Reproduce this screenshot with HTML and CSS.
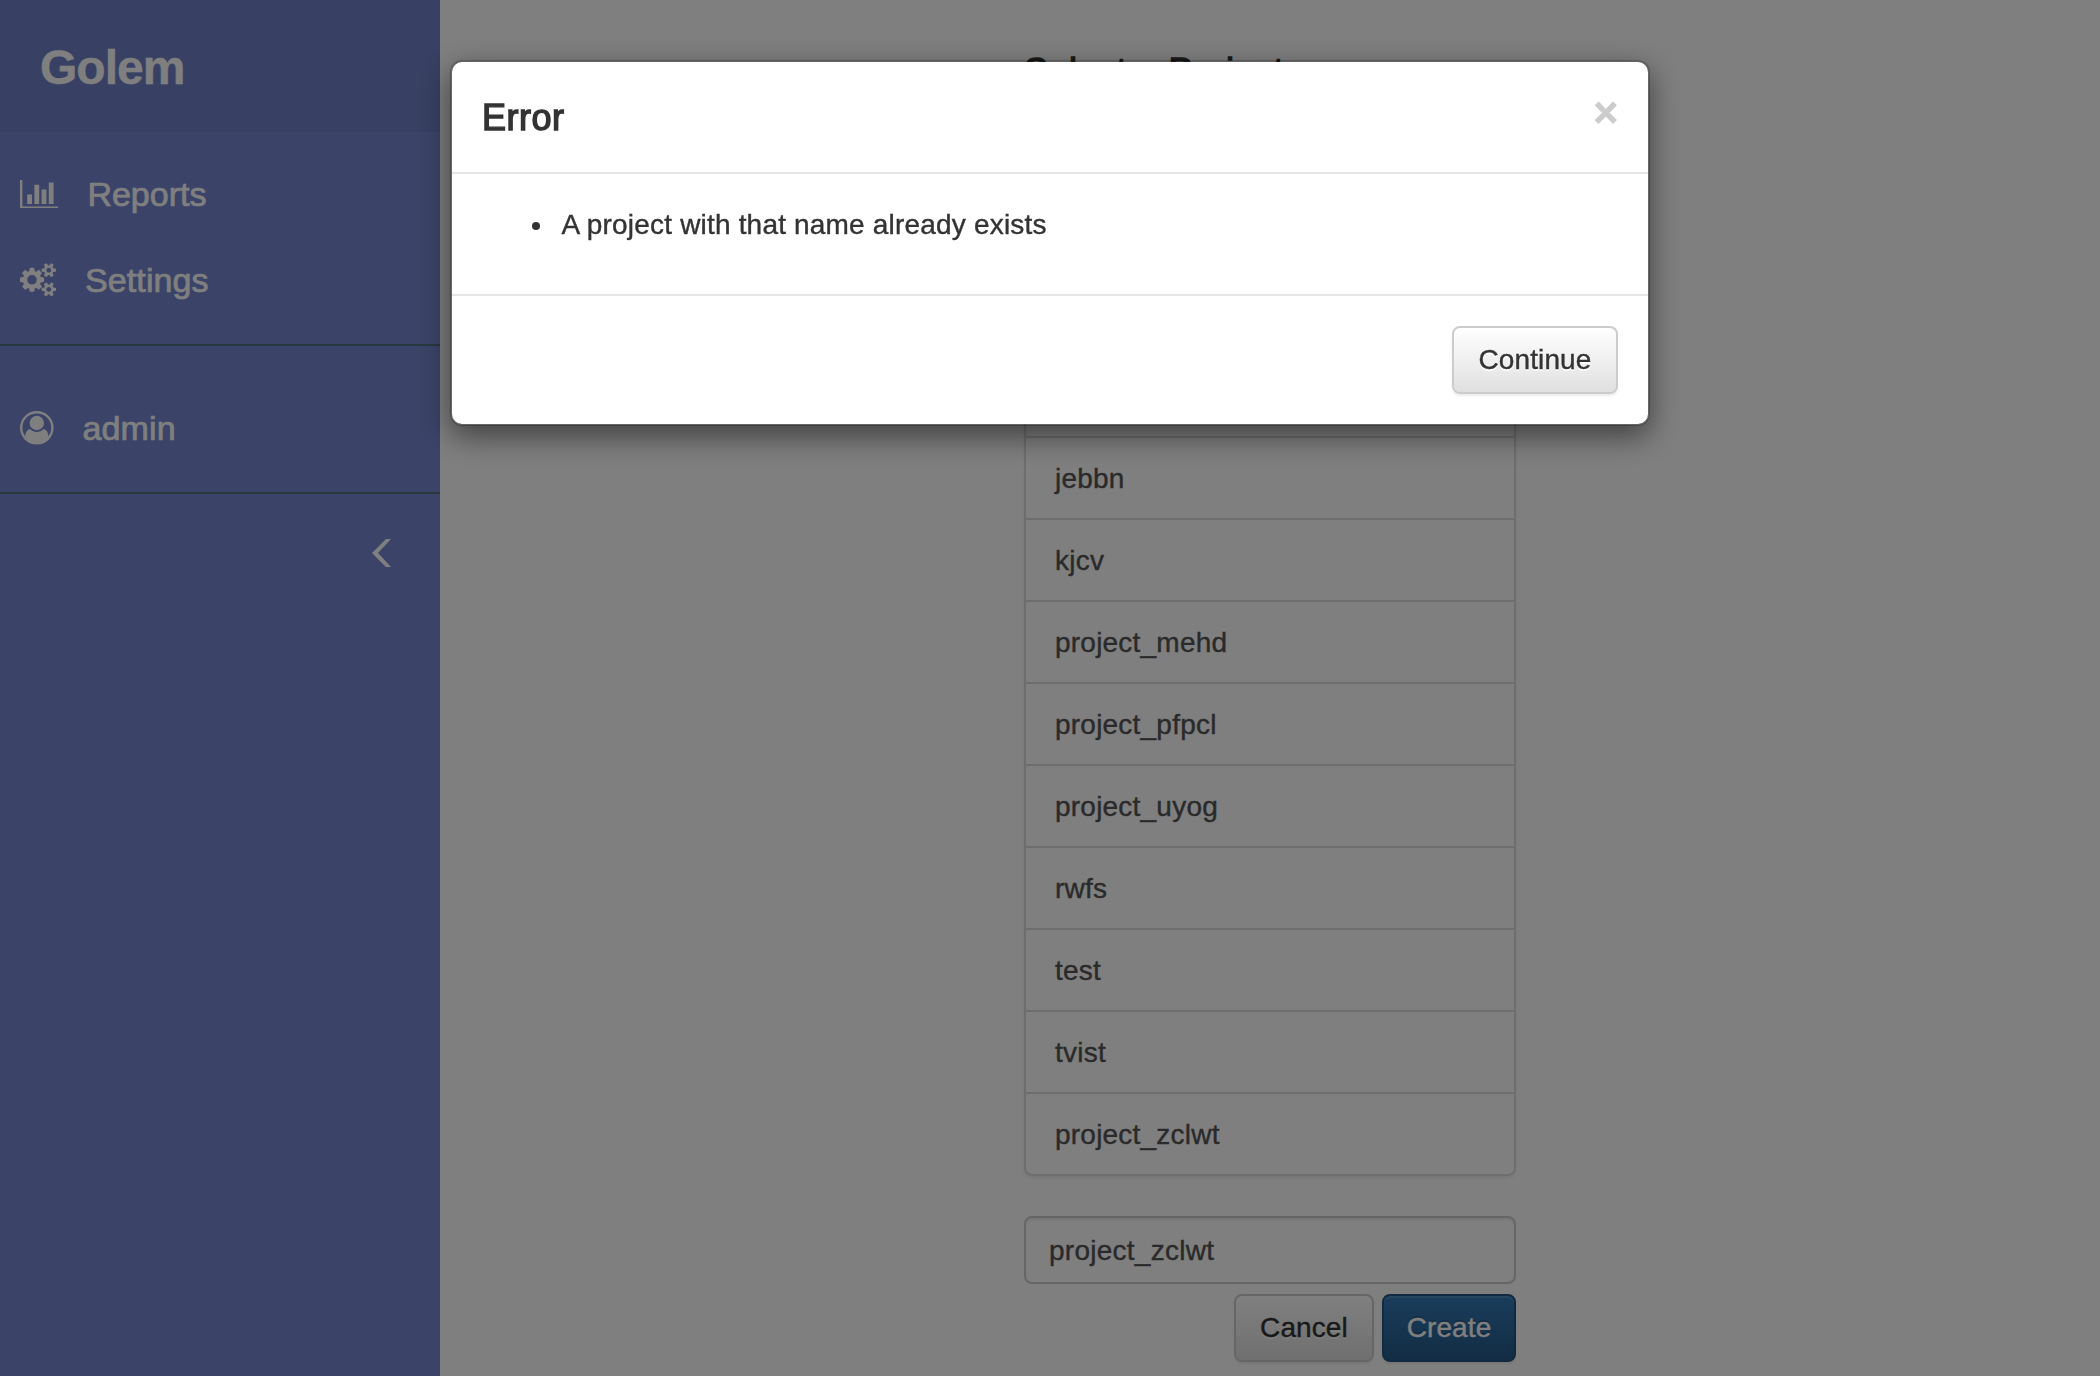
FILE: index.html
```html
<!DOCTYPE html>
<html lang="en">
<head>
<meta charset="utf-8">
<title>Golem</title>
<link rel="stylesheet" href="styles.css">
</head>
<body>
<div class="app">
  <aside class="sidebar">
    <div class="brand">Golem</div>
    <nav class="nav">
      <a class="nav-item">
        <svg class="icon-chart" viewBox="0 128 2048 1536"><path d="M640 896v512h-256v-512h256zm384-512v1024h-256v-1024h256zm1024 1152v128h-2048v-1536h128v1408h1920zm-640-896v768h-256v-768h256zm384-384v1152h-256v-1152h256z"/></svg>
        <span class="reports">Reports</span>
      </a>
      <a class="nav-item">
        <svg class="icon-cogs" viewBox="0 0 1920 1792"><path d="M896 896q0-106-75-181t-181-75-181 75-75 181 75 181 181 75 181-75 75-181zm768 512q0-52-38-90t-90-38-90 38-38 90q0 53 37.500 90.500t90.500 37.500 90.500-37.500 37.500-90.500zm0-1024q0-52-38-90t-90-38-90 38-38 90q0 53 37.500 90.500t90.500 37.500 90.500-37.500 37.500-90.500zm-384 421v185q0 10-7 19.500t-16 10.500l-155 24q-11 35-32 76 34 48 90 115 7 11 7 20 0 12-7 19-23 30-82.500 89.500t-78.500 59.500q-11 0-21-7l-115-90q-37 19-77 31-11 108-23 155-7 24-30 24h-186q-11 0-20-7.500t-10-17.500l-23-153q-34-10-75-31l-118 89q-7 7-20 7-11 0-21-8-144-133-144-160 0-9 7-19 10-14 41-53t47-61q-23-44-35-82l-152-24q-10-1-17-9.500t-7-19.500v-185q0-10 7-19.500t16-10.500l155-24q11-35 32-76-34-48-90-115-7-11-7-20 0-12 7-20 22-30 82-89t79-59q11 0 21 7l115 90q34-18 77-32 11-108 23-154 7-24 30-24h186q11 0 20 7.500t10 17.500l23 153q34 10 75 31l118-89q8-7 20-7 11 0 21 8 144 133 144 160 0 8-7 19-12 16-42 54t-45 60q23 48 34 82l152 23q10 2 17 10.500t7 19.500zm640 533v140q0 16-149 31-12 27-30 52 51 113 51 138 0 4-4 7-122 71-124 71-8 0-46-47t-52-68q-20 2-30 2t-30-2q-14 21-52 68t-46 47q-2 0-124-71-4-3-4-7 0-25 51-138-18-25-30-52-149-15-149-31v-140q0-16 149-31 13-29 30-52-51-113-51-138 0-4 4-7 4-2 35-20t59-34 30-16q8 0 46 46.500t52 67.500q20-2 30-2t30 2q51-71 92-112l6-2q4 0 124 70 4 3 4 7 0 25-51 138 17 23 30 52 149 15 149 31zm0-1024v140q0 16-149 31-12 27-30 52 51 113 51 138 0 4-4 7-122 71-124 71-8 0-46-47t-52-68q-20 2-30 2t-30-2q-14 21-52 68t-46 47q-2 0-124-71-4-3-4-7 0-25 51-138-18-25-30-52-149-15-149-31v-140q0-16 149-31 13-29 30-52-51-113-51-138 0-4 4-7 4-2 35-20t59-34 30-16q8 0 46 46.500t52 67.500q20-2 30-2t30 2q51-71 92-112l6-2q4 0 124 70 4 3 4 7 0 25-51 138 17 23 30 52 149 15 149 31z"/></svg>
        <span class="settings">Settings</span>
      </a>
    </nav>
    <nav class="nav nav-user">
      <a class="nav-item">
        <svg class="icon-user" viewBox="0 0 1792 1792"><circle class="ring" cx="896" cy="896" r="832"/><circle cx="896" cy="640" r="384"/><path d="M1523 1339q-22-155-87.500-257.500t-184.500-118.500q-67 74-159.500 115.500t-195.500 41.500-195.500-41.500-159.500-115.500q-119 16-184.500 118.500t-87.500 257.500q106 150 271 300t356 87.500 356-87.500 271-300z"/></svg>
        <span class="user">admin</span>
      </a>
    </nav>
    <div class="collapse">
      <svg class="icon-left" viewBox="0 0 19 28"><path d="M0 14 14 0h5L6 14l13 14h-5z"/></svg>
    </div>
  </aside>
  <main class="main">
    <div class="column">
      <h4 class="heading">Select a Project</h4>
      <ul class="projects">
        <li></li>
        <li>jebbn</li>
        <li>kjcv</li>
        <li>project_mehd</li>
        <li>project_pfpcl</li>
        <li>project_uyog</li>
        <li>rwfs</li>
        <li>test</li>
        <li>tvist</li>
        <li>project_zclwt</li>
      </ul>
      <input class="field" type="text" value="project_zclwt">
      <div class="actions">
        <button class="btn btn-default cancel">Cancel</button>
        <button class="btn btn-primary create">Create</button>
      </div>
    </div>
  </main>
</div>
<div class="backdrop">
  <div class="modal">
    <div class="modal-header">
      <h4 class="modal-title">Error</h4>
      <button class="close">×</button>
    </div>
    <div class="modal-body">
      <ul class="errors"><li>A project with that name already exists</li></ul>
    </div>
    <div class="modal-footer">
      <button class="btn btn-default continue">Continue</button>
    </div>
  </div>
</div>
</body>
</html>
```

FILE: styles.css
```css
* { box-sizing: border-box; }
body {
  margin: 0;
  height: 1376px;
  overflow: hidden;
  background: #fff;
  color: #333;
  font: 28px/40px "Liberation Sans", Arial, sans-serif;
  letter-spacing: 0.22px;
  -webkit-text-stroke: 0.4px currentColor;
}
ul, h4 { margin: 0; padding: 0; list-style: none; font-weight: normal; }
svg { display: block; flex: none; fill: currentColor; }

.app { display: flex; height: 1376px; }

.sidebar { width: 440px; flex: none; background: #7688d0; color: #fff; }
.brand {
  height: 132px;
  padding-left: 40px;
  background: #7082c6;
  font-size: 48px;
  font-weight: bold;
  line-height: 136px;
  letter-spacing: -1px;
}
.nav { padding: 19px 0 21px 20px; border-bottom: 2px solid #4e727e; }
.nav-user { padding-top: 39px; }
.nav-item { display: flex; align-items: center; height: 86px; font-size: 34px; -webkit-text-stroke-width: 0.7px; }
.icon-chart { width: 38.4px; height: 28.8px; }
.icon-cogs { width: 36px; height: 33.6px; }
.icon-user { width: 33.6px; height: 33.6px; }
.ring { fill: none; stroke: currentColor; stroke-width: 128; }
.reports { margin-left: 29px; letter-spacing: 0; }
.settings { margin-left: 29px; letter-spacing: 0.1px; }
.user { margin-left: 29px; letter-spacing: 0.1px; }
.collapse { display: flex; justify-content: flex-end; padding: 45px 49px 0 0; }
.icon-left { width: 19px; height: 28px; }

.main { flex: 1; display: flex; justify-content: center; }
.column { width: 492px; padding-top: 52px; }
.heading {
  height: 302px;
  color: #333;
  font-size: 36px;
  letter-spacing: 0.5px;
  -webkit-text-stroke: 1.3px currentColor;
}
.projects {
  border-radius: 8px;
  box-shadow: 0 2px 4px rgba(0, 0, 0, 0.075);
  color: #555;
}
.projects li {
  height: 84px;
  margin-bottom: -2px;
  padding: 21px 29px 19px;
  border: 2px solid #ddd;
}
.projects li:last-child { margin-bottom: 0; border-radius: 0 0 8px 8px; }
.field {
  display: block;
  width: 492px;
  height: 68px;
  margin: 40px 0 10px;
  padding: 14px 24px 12px 23px;
  border: 2px solid #ccc;
  border-radius: 8px;
  background: #fff;
  box-shadow: inset 0 2px 2px rgba(0, 0, 0, 0.075);
  color: #555;
  font: inherit;
  letter-spacing: 0.26px;
}
.actions { display: flex; justify-content: flex-end; gap: 8px; }

.btn {
  height: 68px;
  padding: 0;
  border: 2px solid #ccc;
  border-radius: 8px;
  font: inherit;
  letter-spacing: 0.1px;
  box-shadow: inset 0 2px 0 rgba(255, 255, 255, 0.15), 0 2px 2px rgba(0, 0, 0, 0.075);
}
.btn-default {
  background: linear-gradient(#fff, #e0e0e0);
  background-clip: padding-box;
  color: #333;
  text-shadow: 0 2px 0 #fff;
}
.btn-primary {
  border-color: #245580;
  background: linear-gradient(#337ab7, #265a88);
  color: #fff;
  text-shadow: 0 -2px 0 rgba(0, 0, 0, 0.2);
}
.cancel { width: 140px; }
.create { width: 134px; }
.continue { width: 166px; }

.backdrop {
  position: fixed;
  inset: 0;
  padding-top: 60px;
  background: rgba(0, 0, 0, 0.5);
}
.modal {
  width: 1200px;
  margin: 0 auto;
  border: 2px solid rgba(0, 0, 0, 0.2);
  border-radius: 12px;
  background: #fff;
  background-clip: padding-box;
  box-shadow: 0 10px 30px rgba(0, 0, 0, 0.5);
}
.modal-header {
  display: flex;
  justify-content: space-between;
  height: 112px;
  padding: 30px;
  border-bottom: 2px solid #e5e5e5;
}
.modal-title {
  font-size: 36px;
  line-height: 51px;
  letter-spacing: 0.5px;
  -webkit-text-stroke: 1.4px currentColor;
}
.close {
  height: 42px;
  padding: 0;
  border: 0;
  background: none;
  color: #ccc;
  font: bold 42px/42px "Liberation Sans", Arial, sans-serif;
  -webkit-text-stroke: 0.8px currentColor;
}
.modal-body { height: 120px; padding: 31px 30px 29px; }
.errors { padding-left: 50px; letter-spacing: 0.19px; }
.errors li { display: flex; align-items: center; gap: 21.500px; height: 40px; }
.errors li::before { content: ""; width: 8px; height: 8px; margin-top: 2px; border-radius: 50%; background: currentColor; }
.modal-footer {
  display: flex;
  justify-content: flex-end;
  height: 130px;
  padding: 30px;
  border-top: 2px solid #e5e5e5;
}
```
